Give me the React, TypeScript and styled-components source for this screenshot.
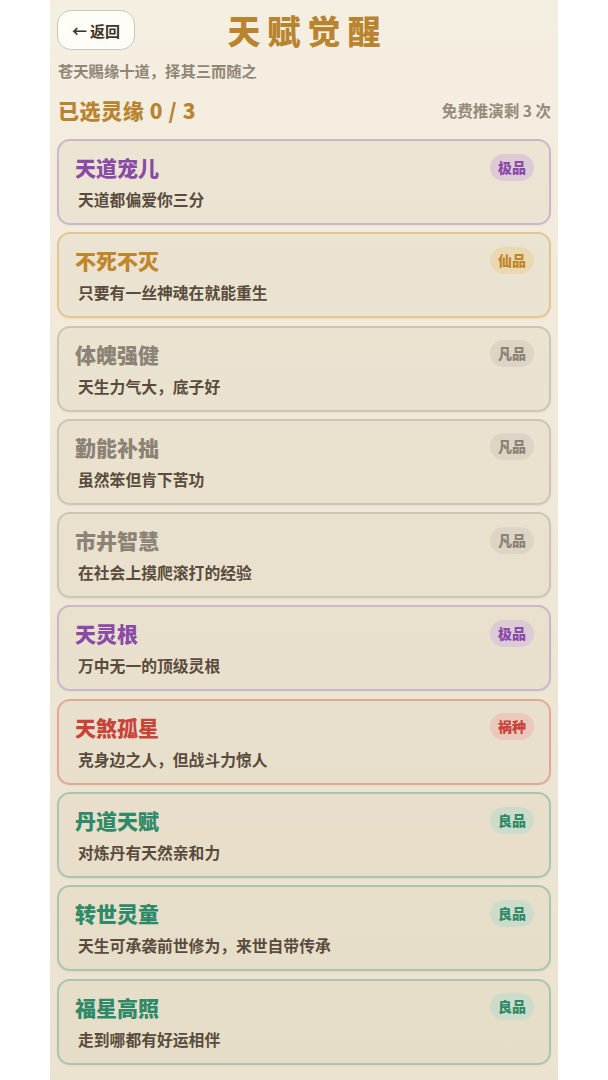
import React from "react";
import styled, { createGlobalStyle } from "styled-components";

const GlobalStyle = createGlobalStyle`
  html, body { margin: 0; padding: 0; background: #ffffff; }
  body { font-family: "Noto Sans CJK SC", "Noto Sans", sans-serif; }
  * { box-sizing: border-box; }
`;

type Tier = "ji" | "xian" | "fan" | "huo" | "liang";

const tiers: Record<Tier, { label: string; fg: string; badge: string; border: string }> = {
  ji: { label: "极品", fg: "#8a4ba8", badge: "#dccbd6", border: "#cbb6ca" },
  xian: { label: "仙品", fg: "#c0862a", badge: "#ead8b2", border: "#e2c68e" },
  fan: { label: "凡品", fg: "#8b8476", badge: "#dcd4c4", border: "#cdc5b3" },
  huo: { label: "祸种", fg: "#c8433a", badge: "#ebc8bc", border: "#e3a898" },
  liang: { label: "良品", fg: "#2f8a69", badge: "#cddcca", border: "#a9c4b0" },
};

const talents: { name: string; desc: string; tier: Tier }[] = [
  { name: "天道宠儿", desc: "天道都偏爱你三分", tier: "ji" },
  { name: "不死不灭", desc: "只要有一丝神魂在就能重生", tier: "xian" },
  { name: "体魄强健", desc: "天生力气大，底子好", tier: "fan" },
  { name: "勤能补拙", desc: "虽然笨但肯下苦功", tier: "fan" },
  { name: "市井智慧", desc: "在社会上摸爬滚打的经验", tier: "fan" },
  { name: "天灵根", desc: "万中无一的顶级灵根", tier: "ji" },
  { name: "天煞孤星", desc: "克身边之人，但战斗力惊人", tier: "huo" },
  { name: "丹道天赋", desc: "对炼丹有天然亲和力", tier: "liang" },
  { name: "转世灵童", desc: "天生可承袭前世修为，来世自带传承", tier: "liang" },
  { name: "福星高照", desc: "走到哪都有好运相伴", tier: "liang" },
];

const Page = styled.div`
  width: 508px;
  min-height: 100vh;
  margin: 0 auto;
  padding: 10px 7px 15px;
  background: linear-gradient(180deg, #f5efe2 0%, #efe7d7 50%, #ebe2cf 100%);
  display: flex;
  flex-direction: column;
`;

const Header = styled.div`
  position: relative;
  height: 40px;
  display: flex;
  align-items: center;
  justify-content: center;
`;

const BackButton = styled.button`
  position: absolute;
  left: 0;
  top: 0;
  height: 40px;
  width: 78px;
  border-radius: 14px;
  border: 1.5px solid #b8cdc1;
  background: #fffdf8;
  color: #3e3428;
  font-family: inherit;
  font-size: 15px;
  font-weight: 700;
  display: flex;
  align-items: center;
  justify-content: center;
  gap: 3px;
  padding: 0;
`;

const Title = styled.h1`
  margin: 0;
  font-size: 33px;
  font-weight: 900;
  letter-spacing: 7px;
  padding-left: 7px;
  color: #b8842f;
  line-height: 40px;
`;

const Subtitle = styled.div`
  margin-top: 10px;
  padding-left: 1px;
  font-size: 15.3px;
  font-weight: 700;
  line-height: 20px;
  color: #8f8676;
`;

const StatusRow = styled.div`
  margin-top: 15px;
  display: flex;
  align-items: center;
  justify-content: space-between;
  height: 30px;
  padding-left: 1px;
`;

const Selected = styled.div`
  font-size: 21px;
  font-weight: 900;
  color: #b8842f;
  letter-spacing: 0.6px;
`;

const Remaining = styled.div`
  font-size: 15.5px;
  font-weight: 700;
  color: #958b7b;
`;

const List = styled.div`
  margin-top: 14px;
  display: flex;
  flex-direction: column;
  gap: 7.3px;
`;

const Card = styled.div<{ $border: string }>`
  border: 2px solid ${(p) => p.$border};
  border-radius: 13px;
  padding: 12px 15px 12px 16px;
  background: rgba(222, 211, 188, 0.32);
  box-shadow: 0 1px 2px rgba(120, 100, 70, 0.08);
  display: flex;
  flex-direction: column;
  gap: 8px;
`;

const CardTop = styled.div`
  display: flex;
  align-items: center;
  justify-content: space-between;
  height: 28px;
`;

const Name = styled.div<{ $color: string }>`
  font-size: 21px;
  font-weight: 900;
  color: ${(p) => p.$color};
  line-height: 28px;
`;

const Badge = styled.span<{ $bg: string; $color: string }>`
  font-size: 14px;
  font-weight: 900;
  color: ${(p) => p.$color};
  background: ${(p) => p.$bg};
  border-radius: 14px;
  padding: 3px 8px;
  line-height: 21px;
`;

const Desc = styled.div`
  padding-left: 3px;
  font-size: 15.8px;
  font-weight: 700;
  line-height: 22px;
  color: #5a4c3d;
`;

export default function App() {
  return (
    <>
      <GlobalStyle />
      <Page>
        <Header>
          <BackButton>
            <span>←</span>
            <span>返回</span>
          </BackButton>
          <Title>天赋觉醒</Title>
        </Header>
        <Subtitle>苍天赐缘十道，择其三而随之</Subtitle>
        <StatusRow>
          <Selected>已选灵缘 0 / 3</Selected>
          <Remaining>免费推演剩 3 次</Remaining>
        </StatusRow>
        <List>
          {talents.map((t) => {
            const tier = tiers[t.tier];
            return (
              <Card key={t.name} $border={tier.border}>
                <CardTop>
                  <Name $color={tier.fg}>{t.name}</Name>
                  <Badge $bg={tier.badge} $color={tier.fg}>
                    {tier.label}
                  </Badge>
                </CardTop>
                <Desc>{t.desc}</Desc>
              </Card>
            );
          })}
        </List>
      </Page>
    </>
  );
}
